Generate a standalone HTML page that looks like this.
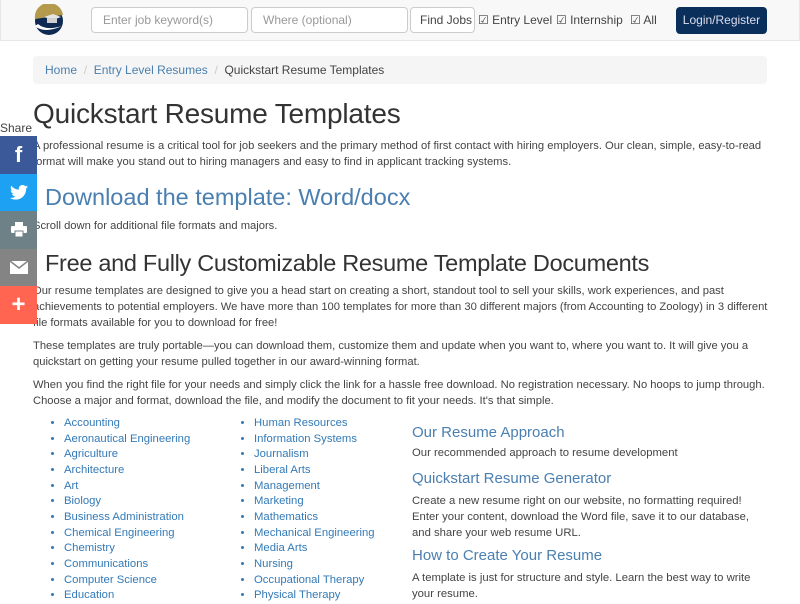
<!DOCTYPE html>
<html><head><meta charset="utf-8"><style>
*{box-sizing:border-box;margin:0;padding:0}
body{width:800px;height:600px;overflow:hidden;background:#fff;font-family:"Liberation Sans",sans-serif;color:#444;font-size:11.3px;position:relative}
.a{position:absolute;white-space:nowrap}
.nav{position:absolute;left:0;top:0;width:800px;height:41px;background:#f8f8f8;border:1px solid #e7e7e7;border-top:0}
.in{position:absolute;top:7px;height:26px;border:1px solid #ccc;border-radius:4px;background:#fff;color:#999;font-size:12px;padding:5px 11px;white-space:nowrap}
.lnk{color:#4a7fb0}
.blue{color:#4a7fb0}
p.t{position:absolute;left:33px;width:740px;line-height:16px;font-size:11.2px;color:#444}
ul{position:absolute;list-style:disc;font-size:11.3px;line-height:15.65px;color:#337ab7}
.sh{position:absolute;left:0;width:37px;height:37.5px;display:flex;align-items:center;justify-content:center;color:#fff}
</style></head><body>
<div class="nav"></div>
<svg class="a" style="left:32px;top:4px" width="36" height="32" viewBox="0 0 36 32">
<circle cx="17" cy="17" r="14" fill="#0e2a52"/>
<path d="M3 15 A14 14 0 0 1 31 11 L3 15 Z" fill="#b39a4c"/>
<path d="M3 22 Q12 30 30 22 Q14 27 6 20Z" fill="#fff"/>
<path d="M12 13 L21 10 L29 13 L21 16Z" fill="#e5e5e5"/><rect x="15" y="14" width="10" height="5" fill="#d0d0d0"/>
</svg>
<div class="in" style="left:91px;width:157px">Enter job keyword(s)</div>
<div class="in" style="left:251px;width:157px">Where (optional)</div>
<div class="in" style="left:410px;width:65px;color:#444;padding:5px 9px">Find Jobs</div>
<div class="a" style="left:478px;top:13px;font-size:12px;color:#444">☑ Entry Level</div>
<div class="a" style="left:556px;top:13px;font-size:12px;color:#444">☑ Internship</div>
<div class="a" style="left:630px;top:13px;font-size:12px;color:#444">☑ All</div>
<div class="a" style="left:676px;top:7px;width:91px;height:27px;background:#0b2f5b;border-radius:4px;color:#dde;font-size:12px;text-align:center;line-height:27px">Login/Register</div>

<div class="a" style="left:33px;top:56px;width:734px;height:28px;background:#f5f5f5;border-radius:4px;font-size:12px;padding:7px 12px;color:#444"><span class="lnk">Home</span> <span style="color:#ccc">&nbsp;/&nbsp;</span> <span class="lnk">Entry Level Resumes</span> <span style="color:#ccc">&nbsp;/&nbsp;</span> Quickstart Resume Templates</div>

<div class="a" style="left:33px;top:98px;font-size:28px;color:#333;letter-spacing:-0.2px">Quickstart Resume Templates</div>
<p class="t" style="top:138px;width:745px">A professional resume is a critical tool for job seekers and the primary method of first contact with hiring employers. Our clean, simple, easy-to-read format will make you stand out to hiring managers and easy to find in applicant tracking systems.</p>
<div class="a blue" style="left:45px;top:184px;font-size:23.5px">Download the template: Word/docx</div>
<p class="t" style="top:218px">Scroll down for additional file formats and majors.</p>
<div class="a" style="left:45px;top:250px;font-size:23.5px;color:#333;letter-spacing:-0.3px">Free and Fully Customizable Resume Template Documents</div>
<p class="t" style="top:283px">Our resume templates are designed to give you a head start on creating a short, standout tool to sell your skills, work experiences, and past achievements to potential employers. We have more than 100 templates for more than 30 different majors (from Accounting to Zoology) in 3 different file formats available for you to download for free!</p>
<p class="t" style="top:338px">These templates are truly portable—you can download them, customize them and update when you want to, where you want to. It will give you a quickstart on getting your resume pulled together in our award-winning format.</p>
<p class="t" style="top:377px">When you find the right file for your needs and simply click the link for a hassle free download. No registration necessary. No hoops to jump through. Choose a major and format, download the file, and modify the document to fit your needs. It's that simple.</p>
<ul style="left:64px;top:416px"><li>Accounting</li><li>Aeronautical Engineering</li><li>Agriculture</li><li>Architecture</li><li>Art</li><li>Biology</li><li>Business Administration</li><li>Chemical Engineering</li><li>Chemistry</li><li>Communications</li><li>Computer Science</li><li>Education</li></ul>
<ul style="left:254px;top:416px"><li>Human Resources</li><li>Information Systems</li><li>Journalism</li><li>Liberal Arts</li><li>Management</li><li>Marketing</li><li>Mathematics</li><li>Mechanical Engineering</li><li>Media Arts</li><li>Nursing</li><li>Occupational Therapy</li><li>Physical Therapy</li></ul>
<div class="a blue" style="left:412px;top:424px;font-size:15px">Our Resume Approach</div>
<div class="a" style="left:412px;top:447px">Our recommended approach to resume development</div>
<div class="a blue" style="left:412px;top:470px;font-size:15px">Quickstart Resume Generator</div>
<div class="a" style="left:412px;top:493px;line-height:16px;white-space:normal;width:352px">Create a new resume right on our website, no formatting required! Enter your content, download the Word file, save it to our database, and share your web resume URL.</div>
<div class="a blue" style="left:412px;top:547px;font-size:15px">How to Create Your Resume</div>
<div class="a" style="left:412px;top:570px;line-height:16px;white-space:normal;width:345px">A template is just for structure and style. Learn the best way to write your resume.</div>

<div class="a" style="left:0;top:121px;font-size:12px;color:#444">Share</div>
<div class="sh" style="top:136px;background:#3b5998;font-size:22px;font-weight:bold">f</div>
<div class="sh" style="top:173.5px;background:#1da1f2"><svg width="18" height="15" viewBox="0 0 24 20"><path fill="#fff" d="M24 2.4c-.9.4-1.8.7-2.8.8 1-.6 1.800-1.6 2.2-2.7-1 .6-2 1-3.1 1.2A4.9 4.9 0 0 0 11.9 6.2 14 14 0 0 1 1.7 1 4.9 4.9 0 0 0 3.2 7.6c-.8 0-1.600-.2-2.2-.6 0 2.4 1.7 4.4 3.9 4.8-.7.2-1.5.2-2.2.1.6 2 2.4 3.4 4.6 3.4A9.9 9.900 0 0 1 0 17.3 14 14 0 0 0 7.5 19.5c9.1 0 14-7.5 14-14v-.6c1-.7 1.8-1.6 2.5-2.5z"/></svg></div>
<div class="sh" style="top:211px;background:#6d8186"><svg width="16" height="15" viewBox="0 0 16 15"><rect x="4" y="0" width="8" height="4" fill="#fff"/><rect x="0" y="4" width="16" height="7" rx="1" fill="#fff"/><rect x="4" y="9" width="8" height="6" fill="#fff" stroke="#6d8186"/></svg></div>
<div class="sh" style="top:248.5px;background:#848484"><svg width="18" height="13" viewBox="0 0 18 13"><rect width="18" height="13" fill="#fff"/><path d="M0 0 L9 7 L18 0" fill="none" stroke="#848484" stroke-width="1.5"/></svg></div>
<div class="sh" style="top:286px;background:#ff6550;font-size:24px;font-weight:bold">+</div>
</body></html>
